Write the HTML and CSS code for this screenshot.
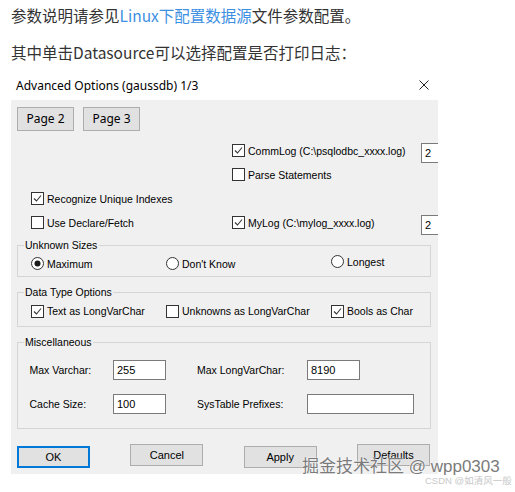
FILE: index.html
```html
<!DOCTYPE html>
<html lang="zh-CN">
<head>
<meta charset="utf-8">
<title>Advanced Options</title>
<link rel="stylesheet" href="styles.css">
</head>
<body>
<div class="page">
  <p class="para p1">参数说明请参见<a class="link">Linux下配置数据源</a>文件参数配置。</p>
  <p class="para p2">其中单击Datasource可以选择配置是否打印日志：</p>

  <div class="titlebar">
    <span class="title">Advanced Options (gaussdb) 1/3</span>
    <svg class="close" viewBox="0 0 10 10"><path d="M0.5 0.5L9.5 9.5M9.5 0.5L0.5 9.5" stroke="#222" stroke-width="1" fill="none"/></svg>
  </div>

  <div class="dialog">
    <div class="pages">
      <button class="pbtn">Page 2</button>
      <button class="pbtn">Page 3</button>
    </div>

    <div class="opts">
      <div></div>
      <div class="logcell">
        <label class="item"><span class="cb"><svg viewBox="0 0 11 11"><path d="M2 5.5L4.5 8L9 2.5" stroke="#333" stroke-width="1.1" fill="none"/></svg></span>CommLog (C:\psqlodbc_xxxx.log)</label>
        <span class="num">2</span>
      </div>
      <div></div>
      <div class="logcell">
        <label class="item"><span class="cb"></span>Parse Statements</label>
      </div>
      <div class="cell">
        <label class="item"><span class="cb"><svg viewBox="0 0 11 11"><path d="M2 5.5L4.5 8L9 2.5" stroke="#333" stroke-width="1.1" fill="none"/></svg></span>Recognize Unique Indexes</label>
      </div>
      <div></div>
      <div class="cell">
        <label class="item"><span class="cb"></span>Use Declare/Fetch</label>
      </div>
      <div class="logcell">
        <label class="item"><span class="cb"><svg viewBox="0 0 11 11"><path d="M2 5.5L4.5 8L9 2.5" stroke="#333" stroke-width="1.1" fill="none"/></svg></span>MyLog (C:\mylog_xxxx.log)</label>
        <span class="num">2</span>
      </div>
    </div>

    <fieldset class="group g1">
      <legend>Unknown Sizes</legend>
      <div class="trio">
        <label class="item"><svg class="rd" viewBox="0 0 13 13"><circle cx="6.5" cy="6.5" r="6" fill="#fff" stroke="#333" stroke-width="1"/><circle cx="6.5" cy="6.5" r="3" fill="#1a1a1a"/></svg>Maximum</label>
        <label class="item"><svg class="rd" viewBox="0 0 13 13"><circle cx="6.5" cy="6.5" r="6" fill="#fff" stroke="#333" stroke-width="1"/></svg>Don't Know</label>
        <label class="item up"><svg class="rd" viewBox="0 0 13 13"><circle cx="6.5" cy="6.5" r="6" fill="#fff" stroke="#333" stroke-width="1"/></svg>Longest</label>
      </div>
    </fieldset>

    <fieldset class="group g2">
      <legend>Data Type Options</legend>
      <div class="trio">
        <label class="item"><span class="cb"><svg viewBox="0 0 11 11"><path d="M2 5.5L4.5 8L9 2.5" stroke="#333" stroke-width="1.1" fill="none"/></svg></span>Text as LongVarChar</label>
        <label class="item"><span class="cb"></span>Unknowns as LongVarChar</label>
        <label class="item"><span class="cb"><svg viewBox="0 0 11 11"><path d="M2 5.5L4.5 8L9 2.5" stroke="#333" stroke-width="1.1" fill="none"/></svg></span>Bools as Char</label>
      </div>
    </fieldset>

    <fieldset class="group g3">
      <legend>Miscellaneous</legend>
      <div class="misc">
        <div class="mrow">
          <span>Max Varchar:</span>
          <span class="field">255</span>
          <span></span>
          <span>Max LongVarChar:</span>
          <span class="field">8190</span>
        </div>
        <div class="mrow">
          <span>Cache Size:</span>
          <span class="field">100</span>
          <span></span>
          <span>SysTable Prefixes:</span>
          <span class="field wide"></span>
        </div>
      </div>
    </fieldset>

    <div class="actions">
      <button class="btn ok low">OK</button>
      <button class="btn">Cancel</button>
      <button class="btn low">Apply</button>
      <button class="btn">Defaults</button>
    </div>
  </div>

  <div class="wm">掘金技术社区 @ wpp0303</div>
  <div class="csdn">CSDN @如清风一般</div>
</div>
</body>
</html>
```

FILE: styles.css
```css
* { box-sizing: border-box; }

body {
  margin: 0;
  background: #fff;
  font-family: "Noto Sans CJK SC", "Noto Sans", sans-serif;
}

.page {
  position: relative;
  width: 515px;
  height: 492px;
  padding-left: 11px;
  overflow: hidden;
}

.para {
  margin: 0;
  font-size: 15.5px;
  line-height: 24px;
  color: #333;
  white-space: nowrap;
}
.p1 { padding-top: 3px; }
.p2 { margin-top: 13px; }
.link { color: #3d8fe2; text-decoration: none; }

.titlebar {
  margin-top: 6px;
  width: 427px;
  height: 30px;
  display: flex;
  align-items: center;
  justify-content: space-between;
  padding: 0 9px 0 5px;
}
.title {
  font-family: "Noto Sans", sans-serif;
  font-size: 12px;
  color: #000;
}
.close { width: 10px; height: 10px; display: block; }

.dialog {
  width: 427px;
  height: 374px;
  background: #f0f0f0;
  overflow: hidden;
  display: flex;
  flex-direction: column;
  font-family: "Liberation Sans", Arial, sans-serif;
  font-size: 10.5px;
  color: #000;
}

.pages {
  display: flex;
  gap: 9px;
  padding: 7px 0 0 6px;
}
.pbtn {
  width: 57px;
  height: 24px;
  margin: 0;
  padding: 0;
  background: #e1e1e1;
  border: 1px solid #adadad;
  border-radius: 0;
  font-family: "Noto Sans", sans-serif;
  font-size: 12px;
  line-height: 22px;
  color: #000;
}

.opts {
  display: grid;
  grid-template-columns: 201px 1fr;
  grid-auto-rows: 24px;
  padding-left: 20px;
  margin-top: 7.5px;
}
.cell, .logcell { display: flex; align-items: center; }
.item {
  display: flex;
  align-items: center;
  gap: 3px;
  white-space: nowrap;
}
.logcell .item { width: 189px; }
.cb {
  width: 13px;
  height: 13px;
  flex: none;
  border: 1px solid #333;
  background: #fff;
  display: flex;
}
.cb svg { width: 11px; height: 11px; display: block; }
.rd { width: 13px; height: 13px; flex: none; display: block; }

.num {
  flex: none;
  width: 40px;
  height: 20px;
  margin-top: 4px;
  border: 1px solid #7a7a7a;
  background: #fff;
  padding-left: 3px;
  line-height: 18px;
  font-size: 11px;
}

.group {
  margin: 0 7px 0 5.5px;
  padding: 0;
  border: 1px solid #d5d5d5;
  min-width: 0;
}
.group legend {
  margin-left: 6px;
  padding: 0 1.5px;
  font-size: 10.5px;
  line-height: 13px;
}
.g1 { margin-top: 4px; }
.g2 { margin-top: 9.5px; padding-bottom: 2.5px; }
.g3 { margin-top: 9.5px; padding: 10.5px 0 14px 0; }

.trio {
  display: grid;
  grid-template-columns: 135px 165px 1fr;
  align-items: center;
  height: 24px;
  padding-left: 13.5px;
}
.up { margin-bottom: 4px; }

.misc {
  display: flex;
  flex-direction: column;
  gap: 14px;
  padding-left: 12px;
}
.mrow {
  display: grid;
  grid-template-columns: 83.5px 53px 31px 110px 107px;
  align-items: center;
  height: 20px;
}
.field {
  width: 53px;
  height: 20px;
  border: 1px solid #7a7a7a;
  background: #fff;
  padding-left: 3px;
  line-height: 18px;
  font-size: 11px;
}
.field.wide { width: 107px; }

.actions {
  display: flex;
  justify-content: space-between;
  align-items: flex-start;
  padding: 0 8px 0 6px;
  margin-top: 15px;
}
.btn {
  width: 73px;
  height: 22px;
  margin: 0;
  padding: 0;
  background: #e1e1e1;
  border: 1px solid #adadad;
  border-radius: 0;
  font-family: "Liberation Sans", Arial, sans-serif;
  font-size: 11px;
  line-height: 20px;
  color: #000;
}
.btn.low { margin-top: 2px; }
.btn.ok { border: 2px solid #0078d7; line-height: 18px; }

.wm {
  position: absolute;
  left: 302px;
  top: 456px;
  font-family: "Liberation Sans", "Noto Sans CJK SC", sans-serif;
  font-size: 17px;
  line-height: 22px;
  color: #7b7b7b;
  white-space: nowrap;
  text-shadow: 0 0 1px #fff, 0 0 2px #fff;
}
.csdn {
  position: absolute;
  left: 425px;
  top: 474px;
  font-family: "Liberation Sans", "Noto Sans CJK SC", sans-serif;
  font-size: 9.5px;
  line-height: 14px;
  color: #c8c8c8;
  white-space: nowrap;
}
```
